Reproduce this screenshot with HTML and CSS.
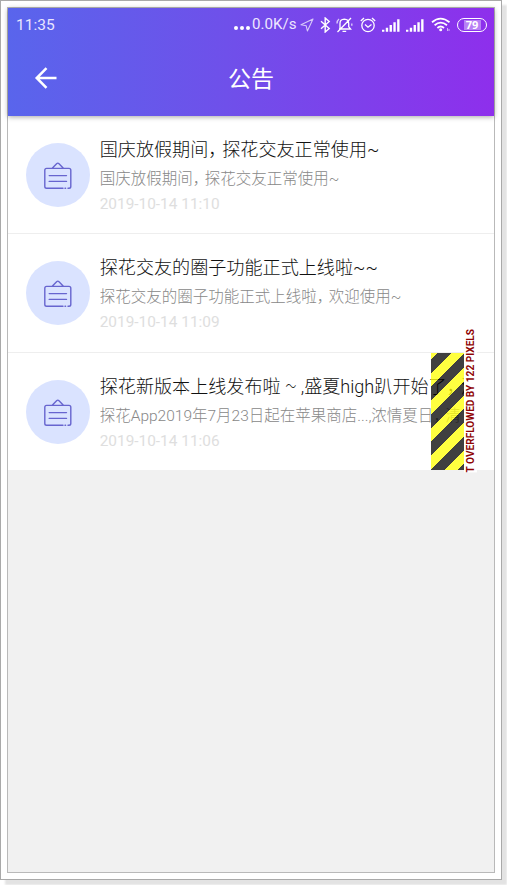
FILE: index.html
```
<!DOCTYPE html>
<html lang="zh-CN">
<head>
<meta charset="utf-8">
<title>公告</title>
<link rel="stylesheet" href="styles.css">
</head>
<body>
<svg class="defs" width="0" height="0"><defs>
<symbol id="board" viewBox="0 0 30 28"><g fill="none" stroke="#6765cf" stroke-width="1.4" stroke-linecap="round" stroke-linejoin="round"><path d="M20 26.3H3.6Q1.8 26.3 1.8 24.5V8.2Q1.8 6.4 3.6 6.4H26Q27.8 6.4 27.8 8.2V24.5Q27.8 26.3 26 26.3H25M22 26.3H22.6M9.2 6.2L13.6 1.7Q14.8.5 16 1.7L20.4 6.2M6.2 13.6H23.5M6.2 19.4H23.5"/></g></symbol>
<symbol id="signal" viewBox="0 0 19 14"><path fill="#fff" d="M0 12h2.5v2H0zM4 10h2.5v4H4zM8 7h2.5v7H8zM12 4h2.5v10H12zM16 1h2.5v13H16z"/></symbol>
</defs></svg>
<div class="frame">
<main class="screen">
<header class="header">
<div class="status">
<span class="clock">11:35</span>
<i class="dots"><b></b><b></b><b></b></i>
<span class="speed">0.0K/s</span>
<svg class="nav" width="14" height="14" viewBox="0 0 14 14"><path d="M13 1L1 6.7l5.2 1.1L7.4 13z" fill="none" stroke="#fff" stroke-opacity=".7" stroke-width="1.1" stroke-linejoin="round"/></svg>
<svg class="bt" width="11" height="16" viewBox="0 0 11 16"><path d="M1 4.3l8.2 7.2L5.2 15V1l4 3.5L1 11.7" fill="none" stroke="#fff" stroke-width="1.4"/></svg>
<svg class="bell" width="17" height="16" viewBox="0 0 17 16"><path d="M4 11.8V6.5Q4 2.4 8.3 2.2Q12.7 2.4 12.7 6.5V9.7L14.6 12H3M6.5 14.3H10.2M1.5 15L15 1" fill="none" stroke="#fff" stroke-width="1.3"/><path d="M1 6.5Q1 3.5 3 2M15.8 6.5V8.7" fill="none" stroke="#fff" stroke-width="1.4" stroke-opacity=".7"/></svg>
<svg class="alarm" width="16" height="16" viewBox="0 0 16 16"><g fill="none" stroke="#fff" stroke-width="1.3"><circle cx="8" cy="8.5" r="6.2"/><path d="M.8 4L4 1M15.2 4L12 1M5 7.5l3 2.7 3.5-2.7"/></g></svg>
<svg class="sig1" width="18" height="14"><use href="#signal"/></svg>
<svg class="sig2" width="18" height="14"><use href="#signal"/></svg>
<svg class="wifi" width="20" height="15" viewBox="0 0 20 15"><g fill="none" stroke="#fff" stroke-width="1.8"><path d="M1 5.2Q9.5-2 18.5 5.2M3.6 8.2Q9.7 3 16 8.2M6.4 11Q9.7 8 13 11"/></g><circle cx="9.7" cy="12.8" r="1.5" fill="#fff"/><path d="M16.5 11v3M18 12v2" stroke="#fff" stroke-opacity=".6"/></svg>
<span class="battery">79</span>
</div>
<div class="bar">
<svg class="back" width="24" height="24" viewBox="0 0 24 24"><path d="M23.5 12H4M13.5 2.2L3.7 12l9.8 9.8" fill="none" stroke="#fff" stroke-width="2.5"/></svg>
<h1>公告</h1>
</div>
</header>
<section class="list">
<article class="item">
<div class="avatar"><svg width="30" height="28"><use href="#board"/></svg></div>
<div class="text"><h2>国庆放假期间<span class="comma">，</span>探花交友正常使用~</h2><p>国庆放假期间<span class="comma">，</span>探花交友正常使用~</p><time>2019-10-14 11:10</time></div>
</article>
<article class="item">
<div class="avatar"><svg width="30" height="28"><use href="#board"/></svg></div>
<div class="text"><h2>探花交友的圈子功能正式上线啦~~</h2><p>探花交友的圈子功能正式上线啦<span class="comma">，</span>欢迎使用~</p><time>2019-10-14 11:09</time></div>
</article>
<article class="item last">
<div class="avatar"><svg width="30" height="28"><use href="#board"/></svg></div>
<div class="text"><h2>探花新版本上线发布啦<span class="wave">～</span>,盛夏high趴开始了<span class="comma">，</span>清</h2><p>探花App2019年7月23日起在苹果商店...,浓情夏日<span class="comma">，</span>清</p><time>2019-10-14 11:06</time></div>
<div class="stripes"></div>
<div class="overflow-label">T OVERFLOWED BY 122 PIXELS</div>
</article>
</section>
</main>
</div>
</body>
</html>
```
FILE: styles.css
```
* { box-sizing: border-box; }
body {
  margin: 0;
  height: 885px;
  overflow: hidden;
  background: #fff;
  font-family: Roboto, "Noto Sans CJK SC", sans-serif;
}
.defs { position: absolute; }
.frame {
  width: 502px;
  height: 880px;
  padding: 6px;
  border: 1px solid #a9a9a9;
  background: #fff;
  box-shadow: 5px 5px 2px #e3e3e3;
}
.screen {
  width: 488px;
  height: 866px;
  border: 1px solid #b9b9b9;
  background: #f1f1f1;
}
.header {
  position: relative;
  z-index: 1;
  height: 108px;
  background: linear-gradient(90deg, #5965ec, #6f50ea 45%, #8e2fec);
  box-shadow: 0 1px 5px rgba(0, 0, 0, .35);
  color: #fff;
}
.status { display: flex; align-items: center; height: 33px; padding-left: 8px; }
.status svg { flex: none; }
.clock { width: 218px; font-size: 15.5px; color: #e9e6ff; }
.dots { display: flex; gap: 2px; width: 18px; padding-top: 7px; }
.dots b { width: 4px; height: 4px; border-radius: 50%; background: #fff; }
.speed { width: 48px; font-size: 15.1px; line-height: 33px; color: #eee6ff; white-space: nowrap; }
.bt { margin-left: 6px; }
.bell { margin-left: 5px; }
.alarm { margin-left: 7px; }
.sig1 { margin-left: 6px; }
.sig2 { margin-left: 6px; }
.wifi { margin-left: 7px; }
.battery {
  width: 30px;
  height: 14px;
  margin-left: 6px;
  border: 1.5px solid #fff;
  border-radius: 7px;
  background: linear-gradient(90deg, transparent 18%, #b780f5 18%, #b780f5 86%, transparent 86%) content-box;
  padding: 1px 2px;
  font: bold 11px/10px "Open Sans", sans-serif;
  text-align: center;
}
.bar { display: flex; align-items: center; height: 75px; padding-left: 25px; }
.back { margin-bottom: 1px; }
h1 { margin: 3px 0 0 171px; font-size: 23px; font-weight: 400; line-height: 34px; }
.list { width: 486px; }
.item {
  position: relative;
  display: flex;
  height: 118.33px;
  padding-left: 18px;
  border-bottom: 1.4px solid #eee;
  background: #fff;
}
.last { height: 117.34px; border-bottom: 0; }
.avatar {
  display: flex;
  align-items: center;
  justify-content: center;
  width: 64px;
  height: 64px;
  margin: 26.5px 10px 0 0;
  padding-top: 3px;
  border-radius: 50%;
  background: #dae3ff;
}
.last .avatar { margin-top: 27px; }
.text { flex: 1; width: 0; margin-top: 19.5px; margin-right: 30px; overflow: hidden; white-space: nowrap; }
.last .text { margin-top: 20px; }
h2, p, time { display: block; margin: 0 0 0 -.3px; font-weight: 300; }
h2 { height: 30px; font-size: 18.1px; line-height: 27px; color: #111; }
p { height: 25px; font-size: 15.5px; line-height: 27px; color: #888; }
time { font-size: 15.4px; font-weight: 400; line-height: 26px; color: #dedede; }
.comma { letter-spacing: -.23em; }
.wave { display: inline-block; width: 20px; text-align: center; transform: scaleX(.6); }
.stripes {
  position: absolute;
  left: 423px;
  top: 0;
  width: 33px;
  height: 117px;
  background: repeating-linear-gradient(135deg, #ffff00bf 0, #ffff00bf 4.6px, #000000bf 4.6px, #000000bf 14.4px, #ffff00bf 14.4px, #ffff00bf 19.4px);
}
.overflow-label {
  position: absolute;
  right: 17px;
  bottom: -2px;
  width: 13px;
  writing-mode: vertical-rl;
  transform: rotate(180deg);
  font-size: 10.1px;
  font-weight: 700;
  line-height: 13px;
  white-space: nowrap;
  color: #8f0505;
  background: #fff;
}
```
